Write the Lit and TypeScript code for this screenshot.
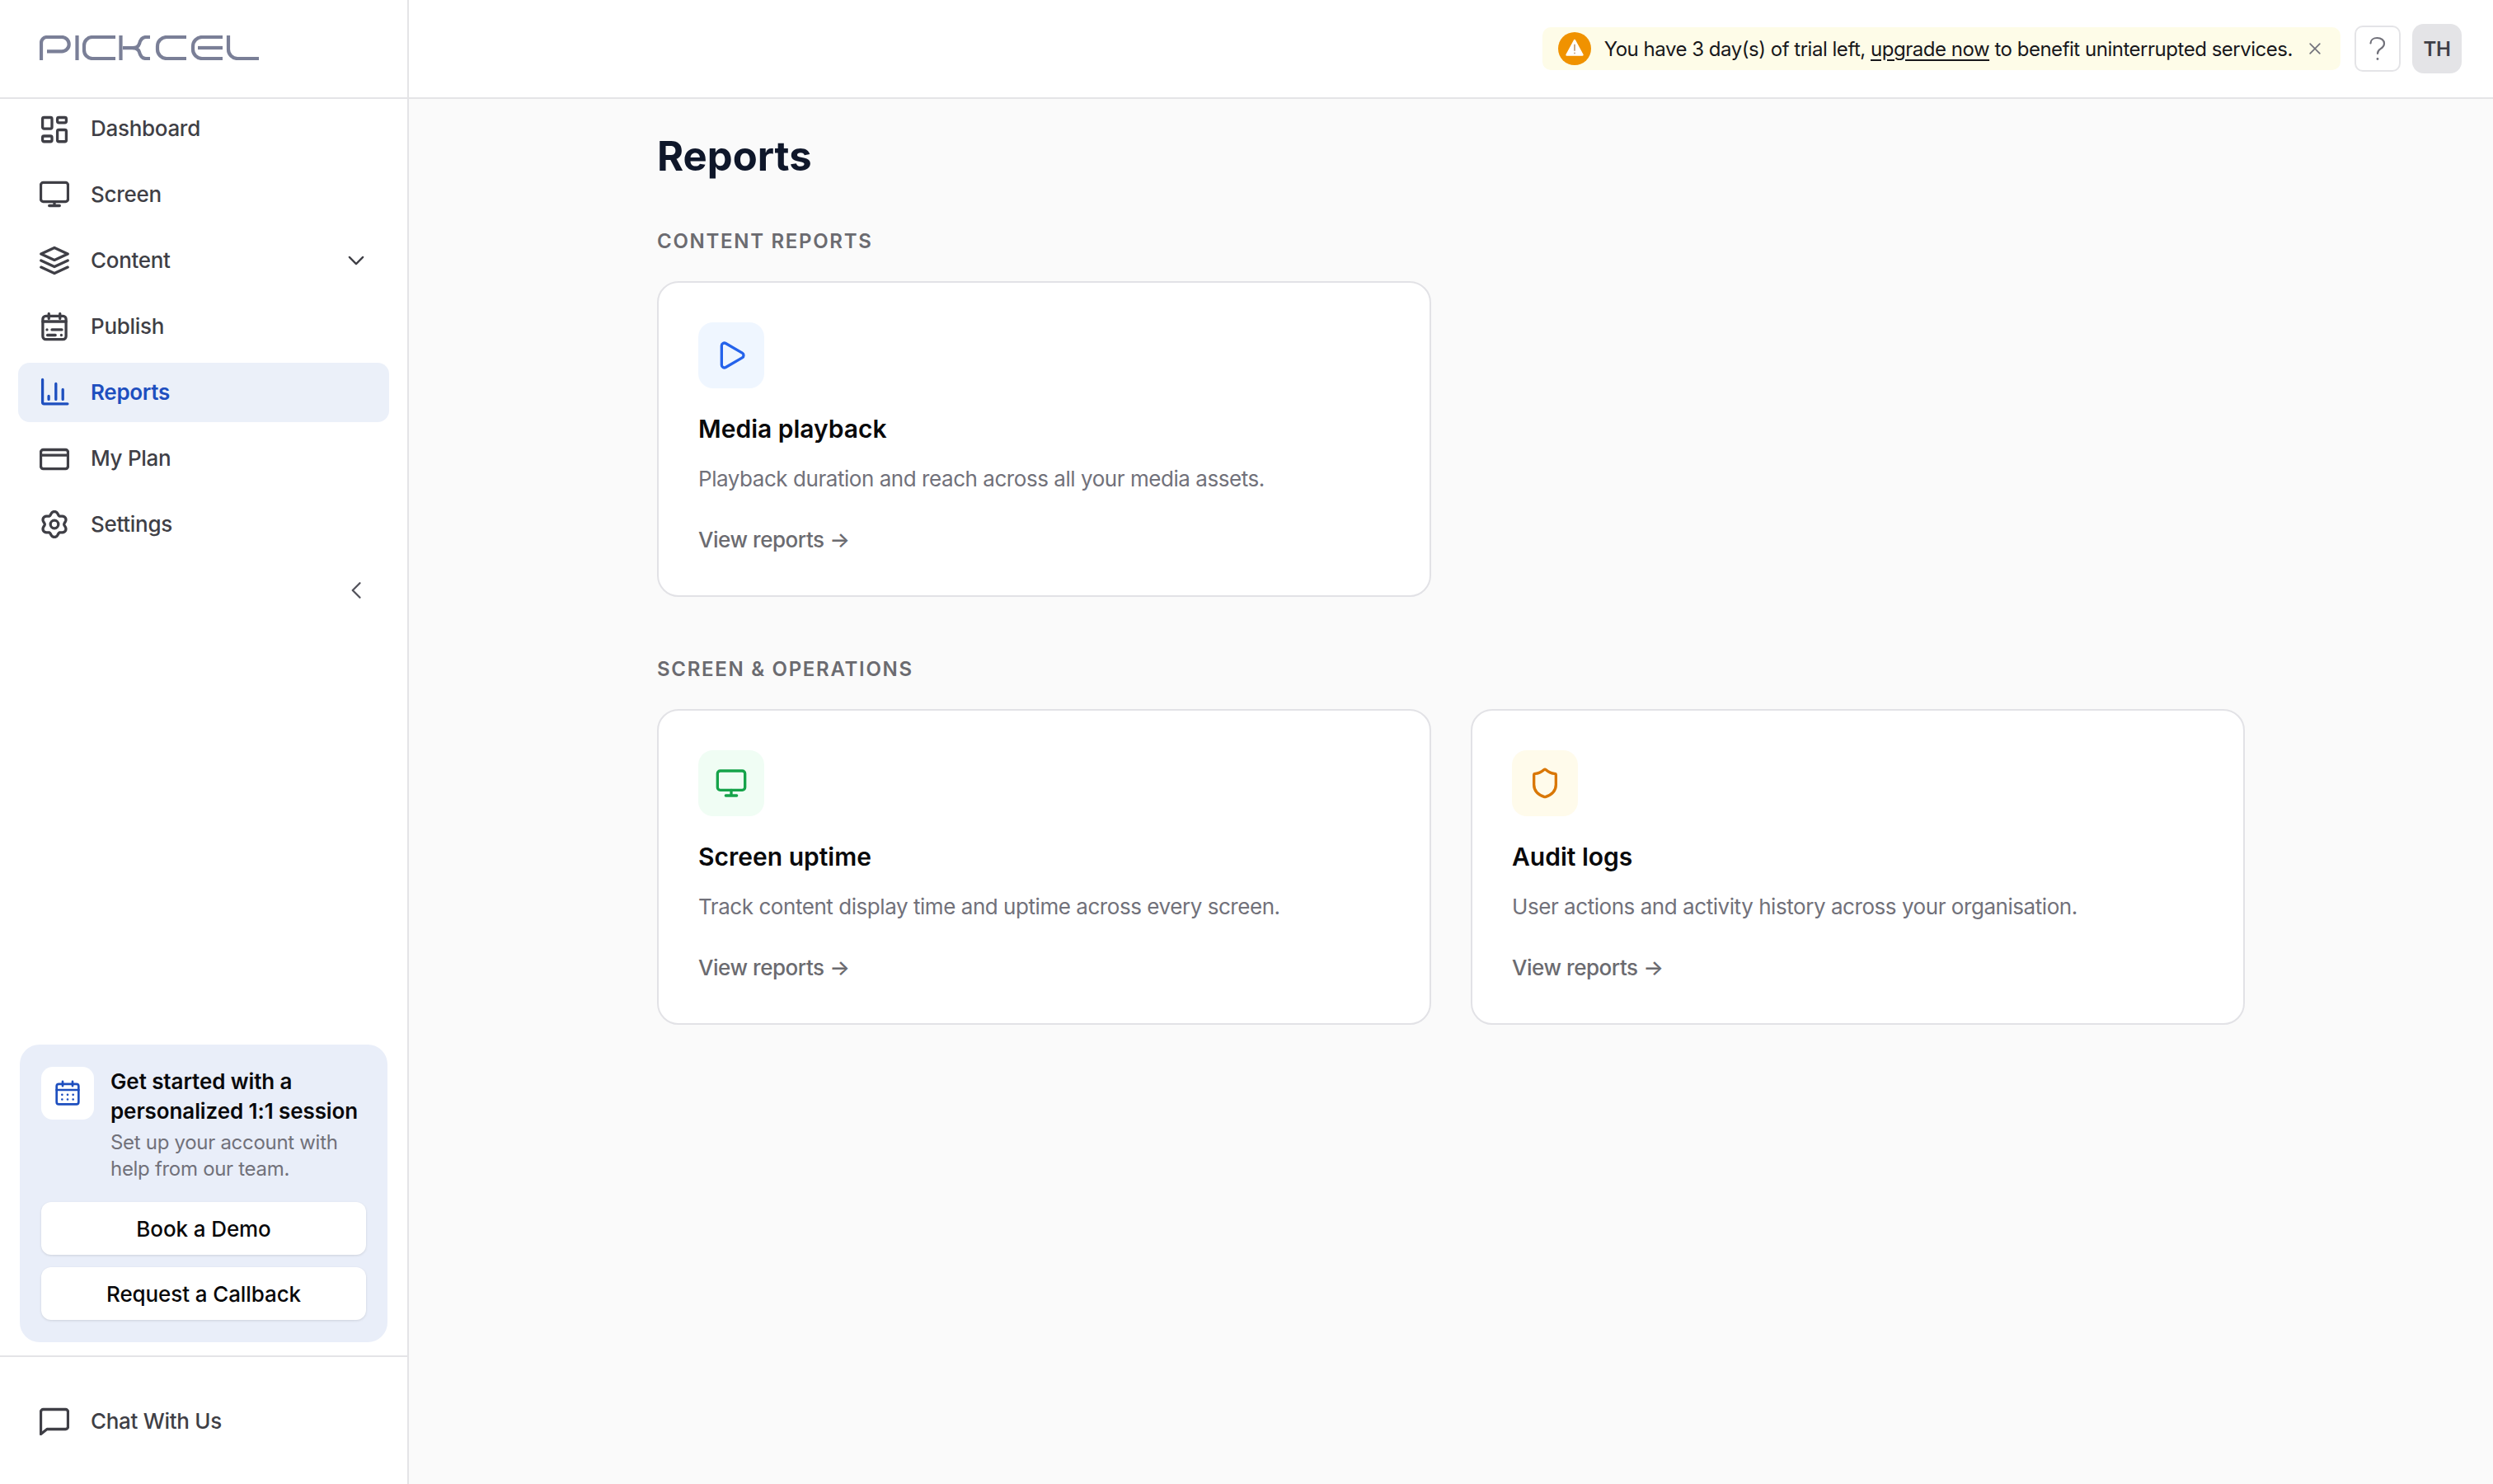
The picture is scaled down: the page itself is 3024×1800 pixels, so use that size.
import { LitElement, css, html, svg } from "lit";
import { customElement } from "lit/decorators.js";

const ic = (body: unknown, size = 36) => html`<svg
  class="ic"
  width=${size}
  height=${size}
  viewBox="0 0 24 24"
  fill="none"
  stroke="currentColor"
  stroke-width="2"
  stroke-linecap="round"
  stroke-linejoin="round"
>${body}</svg>`;

// six soft lobes, one pointing straight up
const gearPath = () => {
  const pts: string[] = [];
  for (let i = 0; i < 120; i++) {
    const a = (i / 120) * Math.PI * 2;
    const w = Math.cos(6 * a);
    const r = 9.3 + 1.25 * w - 0.25 * w * w;
    pts.push(`${(12 + r * Math.sin(a)).toFixed(2)} ${(12 - r * Math.cos(a)).toFixed(2)}`);
  }
  return `M${pts.join("L")}Z`;
};

const icons = {
  dashboard: svg`<rect x="2.4" y="3" width="7.6" height="9.1" rx="1.2"/><rect x="14.4" y="3" width="7.2" height="4.2" rx="1.2"/><rect x="14.4" y="13" width="7.2" height="9.5" rx="1.2"/><rect x="2.4" y="18" width="7.6" height="4.5" rx="1.2"/>`,
  screen: svg`<rect x="1" y="2.3" width="22" height="15.4" rx="2"/><path d="M12 18v3M7.8 21h8.4"/>`,
  content: svg`<path d="M12 1.6 22.8 6.7 12 11.6 1.2 6.7Z"/><path d="M1.2 12 12 17l10.8-5"/><path d="M1.2 17.4 12 22.4l10.8-5"/>`,
  publish: svg`<rect x="2.6" y="3.6" width="18.8" height="18.8" rx="2.4"/><path d="M7.5 1.6v4M16.5 1.6v4M2.6 8h18.8M10 14.6h8M6 14.6h.01M6.4 19h6.4M17.6 19h.01"/>`,
  reports: svg`<path d="M2.4 1.6V20a1.2 1.2 0 0 0 1.2 1.2h19"/><path d="M7.4 15v2.6M13.2 5v12.6M18.8 9.6v8"/>`,
  plan: svg`<rect x="1" y="5" width="22" height="15.4" rx="2"/><path d="M1 9.4h22"/>`,
  settings: svg`<path d=${gearPath()}/><circle cx="12" cy="12" r="3.2"/>`,
  chat: svg`<path d="M3 3h18a2 2 0 0 1 2 2v12a2 2 0 0 1-2 2H6l-5 4V5a2 2 0 0 1 2-2z"/>`,
  play: svg`<path d="M5 5a2 2 0 0 1 3.008-1.728l11.997 6.998a2 2 0 0 1 .003 3.458l-12 7A2 2 0 0 1 5 19z"/>`,
  monitor: svg`<rect x="2" y="3" width="20" height="14" rx="2"/><path d="M12 17v4M8 21h8"/>`,
  shield: svg`<path d="M20 13c0 5-3.5 7.5-7.66 8.95a1 1 0 0 1-.67-.01C7.5 20.5 4 18 4 13V6a1 1 0 0 1 1-1c2 0 4.5-1.2 6.24-2.72a1.17 1.17 0 0 1 1.52 0C14.51 3.81 17 5 19 5a1 1 0 0 1 1 1z"/>`,
  calendar: svg`<rect x="2" y="3.6" width="20" height="18.4" rx="2"/><path d="M7.5 1.4v4M16.5 1.4v4M2 9h20M7 13.4h.01M12 13.4h.01M17 13.4h.01M7 17.6h.01M12 17.6h.01M17 17.6h.01"/>`,
};

const nav = [
  { label: "Dashboard", icon: icons.dashboard },
  { label: "Screen", icon: icons.screen },
  { label: "Content", icon: icons.content, caret: true },
  { label: "Publish", icon: icons.publish },
  { label: "Reports", icon: icons.reports, active: true },
  { label: "My Plan", icon: icons.plan },
  { label: "Settings", icon: icons.settings },
];

const sections = [
  {
    title: "CONTENT REPORTS",
    cards: [
      {
        name: "Media playback",
        text: "Playback duration and reach across all your media assets.",
        icon: icons.play,
        tone: "blue",
      },
    ],
  },
  {
    title: "SCREEN & OPERATIONS",
    cards: [
      {
        name: "Screen uptime",
        text: "Track content display time and uptime across every screen.",
        icon: icons.monitor,
        tone: "green",
      },
      {
        name: "Audit logs",
        text: "User actions and activity history across your organisation.",
        icon: icons.shield,
        tone: "amber",
      },
    ],
  },
];

@customElement("app-root")
export class AppRoot extends LitElement {
  static styles = css`
    :host {
      display: flex;
      height: 1800px;
      background: #fafafa;
      font-family: Inter, "Liberation Sans", sans-serif;
      color: #3f3f46;
      overflow: hidden;
    }
    * {
      box-sizing: border-box;
    }
    .ic {
      flex: none;
      display: block;
    }

    .side {
      width: 496px;
      flex: none;
      display: flex;
      flex-direction: column;
      background: #fff;
      border-right: 2px solid #e4e4e7;
    }
    .logo {
      height: 120px;
      flex: none;
      display: flex;
      align-items: center;
      padding: 0 48px 2px;
      border-bottom: 2px solid #e4e4e7;
      color: #7a7f97;
    }
    .nav {
      display: flex;
      flex-direction: column;
      gap: 8px;
      padding: 0 22px;
    }
    .item {
      height: 72px;
      display: flex;
      align-items: center;
      gap: 26px;
      padding: 0 26px;
      border-radius: 14px;
      font-size: 26px;
      font-weight: 500;
      letter-spacing: -0.3px;
      color: #3f3f46;
    }
    .item > svg,
    .chat > svg {
      stroke-width: 2.2;
    }
    .item span {
      position: relative;
      top: -1px;
    }
    .item .caret {
      top: 0;
    }
    .item.active {
      background: #ebf0f9;
      color: #1e4fbf;
      font-weight: 600;
    }
    .caret {
      margin-left: auto;
      color: #3f3f46;
    }
    .collapse {
      display: flex;
      justify-content: flex-end;
      padding: 30px 47px 0 0;
      color: #52525b;
    }

    .promo {
      margin: auto 24px 0;
      height: 361px;
      padding: 27px 26px;
      border-radius: 24px;
      background: #e9eef9;
      display: flex;
      flex-direction: column;
    }
    .promo-head {
      display: flex;
      gap: 20px;
    }
    .promo-icon {
      width: 64px;
      height: 64px;
      flex: none;
      display: flex;
      align-items: center;
      justify-content: center;
      background: #fff;
      border-radius: 14px;
      color: #1e4fbf;
    }
    .promo-title {
      font-size: 26px;
      line-height: 36px;
      font-weight: 600;
      letter-spacing: -0.1px;
      color: #09090b;
    }
    .promo-sub {
      margin-top: 4px;
      font-size: 24px;
      line-height: 32px;
      letter-spacing: -0.3px;
      color: #71717a;
    }
    .btn {
      height: 64px;
      flex: none;
      display: flex;
      align-items: center;
      justify-content: center;
      margin-top: 15px;
      background: #fff;
      border-radius: 12px;
      box-shadow: 0 1px 3px rgba(0, 0, 0, 0.12);
      font-size: 26px;
      font-weight: 500;
      letter-spacing: -0.1px;
      color: #09090b;
    }
    .promo-head + .btn {
      margin-top: 24px;
    }
    .chat {
      height: 156px;
      flex: none;
      margin-top: 16px;
      border-top: 2px solid #e4e4e7;
      display: flex;
      align-items: center;
      gap: 26px;
      padding: 0 48px;
      font-size: 26px;
      font-weight: 500;
      letter-spacing: -0.3px;
      color: #3f3f46;
    }

    .right {
      flex: 1;
      min-width: 0;
      display: flex;
      flex-direction: column;
    }
    .top {
      height: 120px;
      flex: none;
      background: #fff;
      border-bottom: 2px solid #e4e4e7;
      display: flex;
      align-items: center;
      justify-content: flex-end;
      padding: 0 38px 0 0;
    }
    .alert {
      height: 52px;
      display: flex;
      align-items: center;
      padding: 0 21px 0 19px;
      background: #fefce8;
      border-radius: 10px;
      font-size: 24px;
      letter-spacing: -0.48px;
      color: #18181b;
      white-space: nowrap;
    }
    .alert u {
      text-underline-offset: 4px;
    }
    .alert-text {
      margin: 0 17px 0 16px;
    }
    .close {
      color: #71717a;
    }
    .help {
      width: 56px;
      height: 56px;
      margin-left: 17px;
      display: flex;
      align-items: center;
      justify-content: center;
      background: #fff;
      border: 2px solid #e4e4e7;
      border-radius: 10px;
      color: #71717a;
    }
    .avatar {
      width: 60px;
      height: 60px;
      margin-left: 14px;
      display: flex;
      align-items: center;
      justify-content: center;
      background: #e4e4e7;
      border-radius: 14px;
      font-size: 24px;
      font-weight: 600;
      letter-spacing: -0.3px;
      color: #3f3f46;
    }

    .main {
      width: 1926px;
      margin: 0 auto;
      padding-top: 34px;
    }
    h1 {
      margin: 0;
      font-size: 49px;
      line-height: 72px;
      font-weight: 700;
      color: #0f172a;
    }
    .sec-label {
      margin-top: 51px;
      height: 32px;
      line-height: 32px;
      font-size: 24px;
      font-weight: 600;
      letter-spacing: 1.7px;
      color: #6b6b70;
    }
    section + section .sec-label {
      margin-top: 72px;
    }
    .grid {
      margin-top: 32px;
      display: grid;
      grid-template-columns: 1fr 1fr;
      gap: 48px;
    }
    .card {
      height: 383px;
      padding: 48px;
      background: #fff;
      border: 2px solid #e2e2e6;
      border-radius: 26px;
    }
    .card-icon {
      width: 80px;
      height: 80px;
      display: flex;
      align-items: center;
      justify-content: center;
      border-radius: 18px;
    }
    .blue {
      background: #eff6ff;
      color: #2563eb;
    }
    .green {
      background: #f0fdf4;
      color: #16a34a;
    }
    .amber {
      background: #fffbeb;
      color: #d97706;
    }
    .card-name {
      margin-top: 29px;
      font-size: 30px;
      line-height: 40px;
      font-weight: 600;
      color: #09090b;
    }
    .card-text {
      margin-top: 21px;
      font-size: 26px;
      line-height: 40px;
      letter-spacing: -0.45px;
      color: #71717a;
    }
    .card-link {
      margin-top: 34px;
      font-size: 26px;
      line-height: 40px;
      font-weight: 500;
      letter-spacing: -0.45px;
      color: #6b6b70;
    }
  `;

  render() {
    return html`
      <aside class="side">
        <div class="logo">
          <svg width="266" height="30" viewBox="0 0 266 30" fill="none" stroke="currentColor" stroke-width="4.2">
            <path d="M2 30V9a7 7 0 0 1 7-7h18a8.7 8.7 0 0 1 0 17.4H9" />
            <path d="M45.5 0v30" />
            <path d="M92 2H64a10 10 0 0 0-10 10v6a10 10 0 0 0 10 10h28" />
            <path d="M98.5 0v30" />
            <path d="M101 15.2h12c5 0 7-2 8-5 1-4 3-8.2 8-8.2h5" />
            <path d="M113 15.2c5 0 7 2 8 5 1 4 3 7.8 8 7.8h5" />
            <path d="M178 2h-24a11 11 0 0 0-11 11v4a11 11 0 0 0 11 11h24" />
            <path d="M222 2h-25a11 11 0 0 0-11 11v4a11 11 0 0 0 11 11h25" />
            <path d="M192 15h30" />
            <path d="M229 0v17a11 11 0 0 0 11 11h26" />
          </svg>
        </div>
        <nav class="nav">
          ${nav.map(
            (n) => html`<div class="item ${n.active ? "active" : ""}">
              ${ic(n.icon)}<span>${n.label}</span>
              ${n.caret
                ? html`<span class="caret">${ic(svg`<path d="M5 8.5l7 7 7-7"/>`, 28)}</span>`
                : ""}
            </div>`
          )}
        </nav>
        <div class="collapse">${ic(svg`<path d="M15 4.5 7.5 12l7.5 7.5"/>`, 28)}</div>

        <div class="promo">
          <div class="promo-head">
            <div class="promo-icon">${ic(icons.calendar, 32)}</div>
            <div>
              <div class="promo-title">Get started with a personalized 1:1 session</div>
              <div class="promo-sub">Set up your account with help from our team.</div>
            </div>
          </div>
          <div class="btn">Book a Demo</div>
          <div class="btn">Request a Callback</div>
        </div>
        <div class="chat">${ic(icons.chat)}<span>Chat With Us</span></div>
      </aside>

      <div class="right">
        <header class="top">
          <div class="alert">
            <svg width="40" height="40" viewBox="0 0 40 40">
              <circle cx="20" cy="20" r="20" fill="#f09200" />
              <path d="M20 10 29.5 27.5H10.5Z" fill="#fff" stroke="#fff" stroke-width="2.4" stroke-linejoin="round" />
              <path d="M20 15.5v6.5M20 25.4v.2" stroke="#c9a98a" stroke-width="2" stroke-linecap="round" />
            </svg>
            <span class="alert-text">You have 3 day(s) of trial left, <u>upgrade now</u> to benefit uninterrupted services.</span>
            <span class="close">${ic(svg`<path d="M5 5l14 14M19 5 5 19"/>`, 20)}</span>
          </div>
          <div class="help">
            <svg width="24" height="32" viewBox="0 0 24 32" fill="none" stroke="currentColor" stroke-width="2.2" stroke-linecap="round">
              <path d="M3.5 9.5C3.5 5.5 7 3 11.5 3 16.5 3 20 5.8 20 9.8c0 3.4-2 5-4.6 6.6-2.2 1.4-3.4 2.8-3.4 5.6" />
              <path d="M12 28.4v.2" stroke-width="2.8" />
            </svg>
          </div>
          <div class="avatar">TH</div>
        </header>
        <main class="main">
          <h1>Reports</h1>
          ${sections.map(
            (s) => html`<section>
              <div class="sec-label">${s.title}</div>
              <div class="grid">
                ${s.cards.map(
                  (c) => html`<div class="card">
                    <div class="card-icon ${c.tone}">${ic(c.icon, 40)}</div>
                    <div class="card-name">${c.name}</div>
                    <div class="card-text">${c.text}</div>
                    <div class="card-link">View reports →</div>
                  </div>`
                )}
              </div>
            </section>`
          )}
        </main>
      </div>
    `;
  }
}
